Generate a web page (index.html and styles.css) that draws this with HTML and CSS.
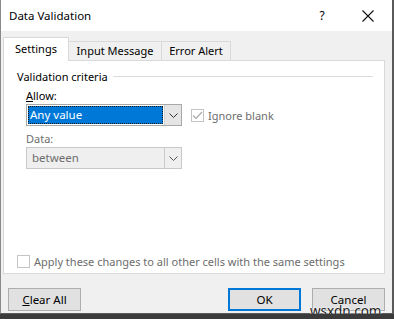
FILE: index.html
```html
<!DOCTYPE html>
<html lang="en">
<head>
    <meta charset="utf-8">
    <title>Data Validation</title>
    <link rel="stylesheet" href="styles.css">
</head>
<body>
    <div class="window">
        <div class="titlebar">
            <span class="title">Data Validation</span>
            <span class="help">?</span>
            <span class="close">
                <svg width="12" height="12" viewBox="0 0 12 12"><path d="M0.5 0.5 L11.5 11.5 M11.5 0.5 L0.5 11.5" stroke="#111" stroke-width="1.1" fill="none"/></svg>
            </span>
        </div>

        <div class="body">
            <div class="tabs">
                <div class="tab active">Settings</div>
                <div class="tab input">Input Message</div>
                <div class="tab error">Error Alert</div>
            </div>

            <div class="panel">
                <div class="group">
                    <span class="group-label">Validation criteria</span>
                    <span class="group-line"></span>
                </div>

                <div class="field">
                    <div class="label"><u>A</u>llow:</div>
                    <div class="row">
                        <div class="combo">
                            <div class="combo-value selected"><span>Any value</span></div>
                            <div class="combo-arrow">
                                <svg width="9" height="5" viewBox="0 0 9 5"><path d="M0.5 0.5 L4.5 4.5 L8.5 0.5" stroke="#333" fill="none"/></svg>
                            </div>
                        </div>
                        <div class="check disabled">
                            <span class="box checked">
                                <svg width="11" height="9" viewBox="0 0 11 9"><path d="M1 4.5 L4 7.5 L10 1" stroke="#a8a8a8" stroke-width="1.2" fill="none"/></svg>
                            </span>
                            <span>Ignore blank</span>
                        </div>
                    </div>
                </div>

                <div class="field data">
                    <div class="label muted">Data:</div>
                    <div class="combo disabled">
                        <div class="combo-value">between</div>
                        <div class="combo-arrow">
                            <svg width="9" height="5" viewBox="0 0 9 5"><path d="M0.5 0.5 L4.5 4.5 L8.5 0.5" stroke="#555" fill="none"/></svg>
                        </div>
                    </div>
                </div>

                <div class="spacer"></div>

                <div class="check disabled apply">
                    <span class="box"></span>
                    <span>Apply these changes to all other cells with the same settings</span>
                </div>
            </div>

            <div class="buttons">
                <button class="btn"><u>C</u>lear All</button>
                <div class="right">
                    <button class="btn default">OK</button>
                    <button class="btn">Cancel</button>
                </div>
            </div>
        </div>

        <span class="watermark">wsxdn.com</span>
    </div>
</body>
</html>
```

FILE: styles.css
```css
body { margin: 0; background: #3b3b3b; font-family: "Noto Sans", "Open Sans", sans-serif; font-size: 11px; color: #000; }
.window { position: relative; width: 391px; height: 313px; background: #f0f0f0; border-left: 1px solid #8a8a8a; border-right: 2px solid #5a5a5a; border-bottom: 1px solid #5a5a5a; }

.titlebar { height: 31px; background: #fff; display: flex; align-items: center; }
.title { padding-left: 8px; flex: 1; font-size: 11.5px; }
.help { width: 46px; text-align: center; font-size: 12px; }
.close { width: 46px; height: 31px; display: flex; align-items: center; justify-content: center; margin-right: 1px; }

.body { padding: 7px 7px 0 2px; }

.tabs { display: flex; align-items: flex-end; height: 22px; position: relative; z-index: 1; }
.tab { height: 18px; line-height: 18px; text-align: center; border: 1px solid #d9d9d9; border-bottom: none; background: #f0f0f0; margin-left: -1px; }
.tab.active { width: 64px; height: 23px; line-height: 22px; margin-left: 0; margin-bottom: -1px; background: #fff; }
.tab.input { width: 92px; }
.tab.error { width: 68px; }

.panel { background: #fff; border: 1px solid #d9d9d9; height: 212px; display: flex; flex-direction: column; padding: 0 11px 0 13px; }

.group { display: flex; align-items: center; height: 18px; margin-top: 6px; }
.group-line { flex: 1; height: 1px; background: #dcdcdc; margin-left: 5px; }

.field { padding-left: 9px; }
.label { height: 17px; line-height: 17px; margin-top: 2px; }
.field.data .label { margin-top: 4px; }
.muted { color: #6d6d6d; }
.row { display: flex; align-items: center; gap: 9px; }

.combo { width: 154px; height: 20px; border: 1px solid #a8a8a8; display: flex; background: #fff; }
.combo-value { flex: 1; padding: 1px; display: flex; }
.combo-value span { flex: 1; line-height: 17px; padding-left: 2px; font-size: 11.5px; }
.combo-value.selected span { background: #0078d7; color: #fff; outline: 1px dotted #1a1a1a; outline-offset: -1px; }
.combo-arrow { width: 16px; border-left: 1px solid #d4d4d4; background: #e5e5e5; display: flex; align-items: center; justify-content: center; }
.combo.disabled { background: #efefef; border-color: #c9c9c9; }
.combo.disabled .combo-value { padding-left: 5px; line-height: 18px; color: #6d6d6d; font-size: 11.5px; }
.combo.disabled .combo-arrow { background: #efefef; border-left-color: #c9c9c9; }

.check { display: flex; align-items: center; gap: 4px; }
.check.disabled { color: #6d6d6d; }
.box { width: 11px; height: 11px; border: 1px solid #c4c4c4; background: #fff; display: flex; align-items: center; justify-content: center; }

.spacer { flex: 1; }
.apply { margin-bottom: 4px; }

.buttons { display: flex; justify-content: space-between; margin-top: 14px; padding-left: 5px; }
.right { display: flex; gap: 11px; }
.btn { width: 73px; height: 23px; border: 1px solid #adadad; background: #e1e1e1; font-family: inherit; font-size: 11.5px; padding: 0; color: #000; }
.btn.default { border: 2px solid #0078d7; }

.watermark { position: absolute; left: 309px; top: 302px; font-size: 13.5px; color: #222; text-shadow: 0 0 2px #fff, 0 0 2px #fff; }
```
